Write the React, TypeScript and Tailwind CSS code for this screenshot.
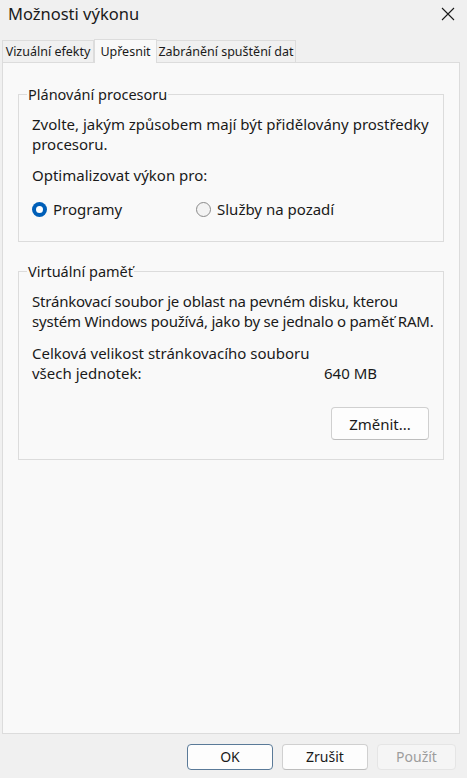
import React from 'react';

const font = { fontFamily: '"Noto Sans", "Open Sans", sans-serif' };

const Radio: React.FC<{ checked?: boolean; label: string }> = ({ checked, label }) => (
  <label className="flex items-center gap-[6px]">
    {checked ? (
      <span className="w-[15px] h-[15px] rounded-full bg-[#005fb8] flex items-center justify-center">
        <span className="w-[7px] h-[7px] rounded-full bg-white" />
      </span>
    ) : (
      <span className="w-[15px] h-[15px] rounded-full border border-[#8a8a8a] bg-[#f3f3f3]" />
    )}
    <span>{label}</span>
  </label>
);

const GroupBox: React.FC<{ title: string; className?: string; children: React.ReactNode }> = ({
  title,
  className,
  children,
}) => (
  <fieldset className={`w-full min-w-0 border border-[#dcdcdc] pl-[13px] ${className ?? ''}`}>
    <legend className="-ml-[5px] px-[1px] leading-[20px] text-[14.5px]">{title}</legend>
    {children}
  </fieldset>
);

export default function App() {
  return (
    <div
      className="w-[467px] h-[778px] bg-[#f0f0f0] text-[15px] leading-[20px] text-[#1a1a1a] flex flex-col overflow-hidden"
      style={font}
    >
      {/* Title bar */}
      <div className="h-[28px] flex items-center justify-between pl-[8px] pr-[12px]">
        <span className="text-[16.5px]">Možnosti výkonu</span>
        <svg width="14" height="14" viewBox="0 0 14 14" className="text-[#1a1a1a]">
          <path d="M1 1 L13 13 M13 1 L1 13" stroke="currentColor" strokeWidth="1.1" fill="none" />
        </svg>
      </div>

      {/* Tabs */}
      <div className="flex items-end h-[34px] pl-[2px] pt-[11px] text-[12.5px]">
        <div className="w-[92px] h-[22px] border border-b-0 border-[#dcdcdc] bg-[#f0f0f0] flex items-center justify-center">
          Vizuální efekty
        </div>
        <div className="w-[63px] h-[24px] border border-b-0 border-[#dcdcdc] bg-[#f9f9f9] flex items-center justify-center -mb-px relative z-10">
          Upřesnit
        </div>
        <div className="w-[139px] h-[22px] border border-b-0 border-l-0 border-[#dcdcdc] bg-[#f0f0f0] flex items-center justify-center">
          Zabránění spuštění dat
        </div>
      </div>

      {/* Panel */}
      <div className="ml-[2px] w-[458px] h-[672px] border border-[#dcdcdc] bg-[#f9f9f9] px-[15px] pt-[21px]">
        <GroupBox title="Plánování procesoru" className="pr-[4px] pt-[10px] pb-[22px]">
          <p className="whitespace-nowrap">
            Zvolte, jakým způsobem mají být přidělovány prostředky
            <br />
            procesoru.
          </p>
          <p className="mt-[11px]">Optimalizovat výkon pro:</p>
          <div className="mt-[14px] flex">
            <div className="w-[164px]">
              <Radio checked label="Programy" />
            </div>
            <Radio label="Služby na pozadí" />
          </div>
        </GroupBox>

        <GroupBox title="Virtuální paměť" className="mt-[19px] pr-[14px] pt-[10px] pb-[19px]">
          <p className="whitespace-nowrap tracking-[-0.2px]">
            Stránkovací soubor je oblast na pevném disku, kterou
            <br />
            systém Windows používá, jako by se jednalo o paměť RAM.
          </p>
          <p className="mt-[12px]">Celková velikost stránkovacího souboru</p>
          <div className="flex">
            <span className="w-[292px]">všech jednotek:</span>
            <span>640 MB</span>
          </div>
          <div className="mt-[24px] flex justify-end">
            <button className="w-[98px] h-[33px] rounded-[4px] border border-[#d0d0d0] border-b-[#bdbdbd] bg-[#fdfdfd]">
              Změnit...
            </button>
          </div>
        </GroupBox>
      </div>

      {/* Footer buttons */}
      <div className="flex justify-end gap-[9px] pr-[11px] pt-[10px]">
        <button className="w-[86px] h-[26px] rounded-[4px] border border-[#5a7a98] bg-[#fdfdfd] text-[14px]">
          OK
        </button>
        <button className="w-[86px] h-[26px] rounded-[4px] border border-[#d0d0d0] border-b-[#bdbdbd] bg-[#fdfdfd] text-[14px]">
          Zrušit
        </button>
        <button className="w-[79px] h-[26px] rounded-[4px] border border-[#e5e5e5] bg-[#f5f5f5] text-[#9d9d9d] text-[14px]">
          Použít
        </button>
      </div>
    </div>
  );
}
